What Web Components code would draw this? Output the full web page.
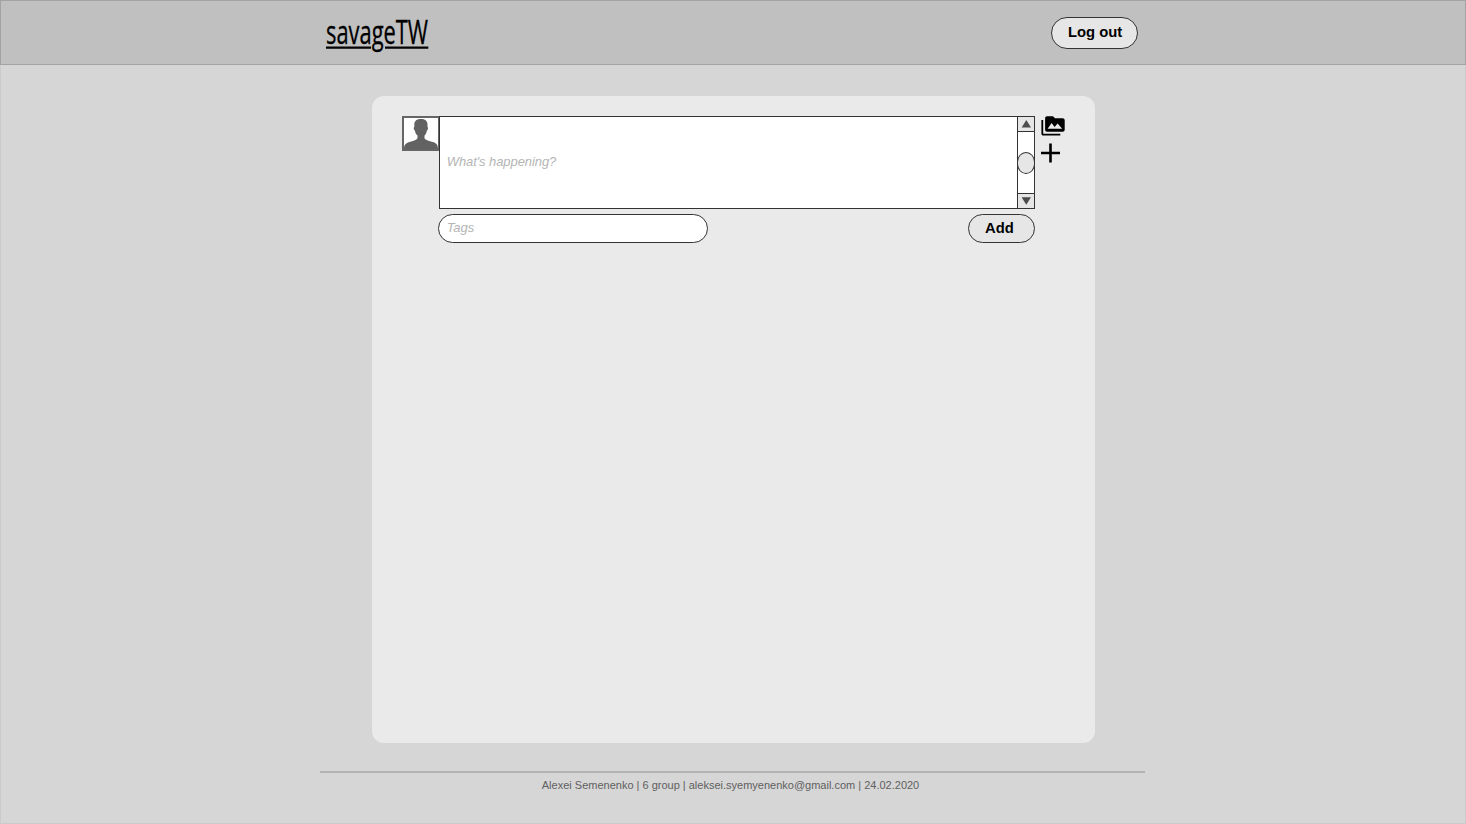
<!DOCTYPE html>
<html lang="en">
<head>
<meta charset="utf-8">
<title>savageTW</title>
<style>
html,body{margin:0;height:100%}
body{font-family:"Liberation Sans",Arial,sans-serif;overflow:hidden}
</style>
</head>
<body>
<savage-app></savage-app>
<script>
const define = (name, html) => customElements.define(name, class extends HTMLElement {
  constructor() {
    super();
    const t = document.createElement('template');
    t.innerHTML = html;
    this.attachShadow({mode: 'open'}).append(t.content.cloneNode(true));
  }
});

define('pill-button', `
<style>
:host{display:block;box-sizing:border-box;border:1.3px solid #333;border-radius:16px;background:#e6e6e6}
button{all:unset;display:flex;align-items:flex-start;box-sizing:border-box;width:100%;height:100%;font:bold 14.800px/15px "Liberation Sans",Arial,sans-serif;color:#000;white-space:nowrap;padding:var(--pad)}
</style>
<button><slot></slot></button>`);

define('site-logo', `
<style>
:host{display:block;width:103px;height:40px}
svg{display:block;overflow:visible}
text{font:400 32px "Open Sans","Liberation Sans",sans-serif;fill:#000;stroke:#000;stroke-width:.3}
</style>
<svg width="103" height="40" viewBox="0 0 103 40">
<text x="0" y="27.300" textLength="102" lengthAdjust="spacingAndGlyphs">savageTW</text>
<path d="M0 30.600h45M59 30.600h43.300" stroke="#000" stroke-width="2.400"/>
</svg>`);

define('site-header', `
<style>
:host{display:flex;flex:none;box-sizing:border-box;height:65px;background:#c0c0c0;border:1px solid #a3a3a3;justify-content:space-between;padding:16px 327px 0 325px}
pill-button{width:87px;height:32px;--pad:7px 0 0 16px}
</style>
<site-logo></site-logo><pill-button>Log out</pill-button>`);

define('user-avatar', `
<style>
:host{display:block;box-sizing:border-box;width:37px;height:35px;border:2px solid #666;border-right-width:1px;background:#fff}
svg{display:block}
</style>
<svg width="34" height="31" viewBox="0 0 34 31"><path fill="#626262" d="M17 1c-4 0-6.700 1.800-6.700 5.500v2.500c-.9 0-.6 3 .6 3.500.3 2.500 1.400 4 2.600 5v2.700c-1 2-4.500 2.900-8 3.800C.8 25.300 0 28 0 31h34c0-3-.8-5.700-5-7-3.500-.9-7.500-1.800-8.500-3.800v-2.700c1.200-1 2-2.500 2.400-5 1.200-.5 1.500-3.500.6-3.500V6.500C23.500 2.800 21 1 17 1z"/></svg>`);

define('scroll-bar', `
<style>
:host{display:flex;flex-direction:column;align-items:center;justify-content:space-between;box-sizing:border-box;width:17px;height:91px;border-left:1.500px solid #333;background:#fff}
.arrow{display:flex;align-items:center;justify-content:center;box-sizing:border-box;width:16px;height:15px;background:#e6e6e6}
.up{border-bottom:1px solid #333}.down{border-top:1px solid #333}
.thumb{box-sizing:border-box;flex:none;width:18px;height:22px;border:1px solid #333;border-radius:50%/45%;background:#e6e6e6}
svg{display:block}
</style>
<div class="arrow up"><svg width="10" height="8"><path d="M5.300 0l4.700 7.500H.6z" fill="#4c4c4c"/></svg></div>
<div class="thumb"></div>
<div class="arrow down"><svg width="10" height="8"><path d="M5.300 7.800L.6 .3H10z" fill="#4c4c4c"/></svg></div>`);

define('message-box', `
<style>
:host{display:flex;box-sizing:border-box;width:596px;height:93px;border:1px solid #333;background:#fff;justify-content:space-between}
p{margin:37px 0 0 6.700px;font:italic 13px/15px "Liberation Sans",Arial,sans-serif;letter-spacing:-.08px;color:#b5b5b5}
</style>
<p><slot></slot></p><scroll-bar></scroll-bar>`);

define('tags-field', `
<style>
:host{display:block;box-sizing:border-box;width:270px;height:29px;border:1.300px solid #333;border-radius:15px;background:#fff;padding:5px 0 0 7.700px;font:italic 13px/15px "Liberation Sans",Arial,sans-serif;letter-spacing:-.08px;color:#b5b5b5}
</style>
<slot></slot>`);

define('media-tools', `
<style>
:host{display:flex;flex-direction:column;gap:7px;margin-left:6px}
svg{display:block}
</style>
<svg width="24" height="20" viewBox="0 0 24 20"><path d="M2.200 4H.4v13.500C.4 19 1.300 19.500 2.300 19.500h17v-1.800H2.200z"/><path fill-rule="evenodd" d="M6 .3C4.900 .3 4.100 1.200 4.100 2.300v11.400c0 1.100.8 2 1.900 2h15.700c1.100 0 2-.9 2-2V4.300c0-1.100-.9-2-2-2h-7.700L12 .3zM6.600 12.800l4-5.800 3 3.900 3-3.300 4.600 5.200z"/></svg>
<svg width="19" height="20" viewBox="0 0 19 20"><path d="M9.500 .5v19M0 10h19" fill="none" stroke="#000" stroke-width="2.600"/></svg>`);

define('post-composer', `
<style>
:host{display:flex;align-items:flex-start}
.fields{display:grid;gap:5px}
.actions{display:flex;justify-content:space-between;margin-left:-1px}
pill-button{width:67px;height:29px;--pad:6px 0 0 16px}
</style>
<user-avatar></user-avatar>
<div class="fields"><message-box>What's happening?</message-box>
<div class="actions"><tags-field>Tags</tags-field><pill-button>Add</pill-button></div></div>
<media-tools></media-tools>`);

define('content-panel', `
<style>
:host{display:block;box-sizing:border-box;width:722.500px;height:647px;margin:31px 0 0 371px;border-radius:12px;background:#eaeaea;padding:20px 0 0 30px}
</style>
<slot></slot>`);

define('site-footer', `
<style>
:host{display:block;box-sizing:border-box;width:824.600px;margin:28px 0 0 319.400px;border-top:2px solid #b3b3b3;padding-top:6px;font:11px/13px "Liberation Sans",Arial,sans-serif;color:#606060}
div{padding-left:221.400px;white-space:nowrap}
</style>
<div><slot></slot></div>`);

define('savage-app', `
<style>
:host{display:flex;flex-direction:column;box-sizing:border-box;height:824px;background:#d6d6d6;border:1px solid #cbcbcb;border-top:0}
site-header{margin:0 -1px}
content-panel,site-footer{flex:none}
</style>
<site-header></site-header>
<content-panel><post-composer></post-composer></content-panel>
<site-footer>Alexei Semenenko | 6 group | aleksei.syemyenenko@gmail.com | 24.02.2020</site-footer>`);
</script>
</body>
</html>
